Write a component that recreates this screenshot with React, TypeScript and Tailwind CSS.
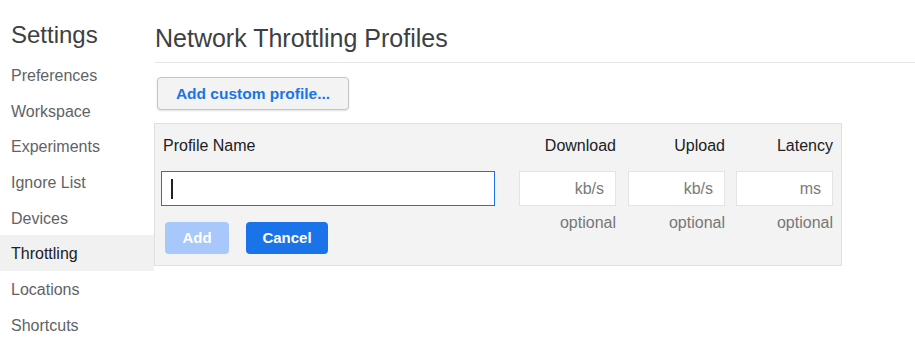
import React from "react";

const items = ["Preferences", "Workspace", "Experiments", "Ignore List", "Devices", "Throttling", "Locations", "Shortcuts"];

function SmallCol({ label, unit, width }: { label: string; unit: string; width: string }) {
  return (
    <div className={`flex flex-col items-end ${width}`}>
      <div className="h-[22px] leading-[22px] text-[16px] text-[#202124]">{label}</div>
      <div className="mt-[14px] h-[35px] w-[97px] bg-white border border-[#e3e3e3] flex items-center justify-end pr-[11px] text-[16px] text-[#7a7a7a]">
        {unit}
      </div>
      <div className="mt-[7px] h-[20px] leading-[20px] text-[16px] text-[#777777]">optional</div>
    </div>
  );
}

export default function App() {
  return (
    <div className="w-[915px] h-[359px] bg-white flex overflow-hidden" style={{ fontFamily: '"Liberation Sans", Arial, sans-serif' }}>
      <div className="w-[154px] shrink-0 flex flex-col">
        <div className="h-[57px] pl-[11px] pt-[20px] text-[24px] leading-[30px] text-[#3c4043]">Settings</div>
        {items.map((it) => (
          <div
            key={it}
            className={`h-[35.7px] pl-[11px] pt-[2px] flex items-center text-[16px] ${it === "Throttling" ? "bg-[#f1f1f1] text-[#202124]" : "text-[#5f6368]"}`}
          >
            {it}
          </div>
        ))}
      </div>
      <div className="flex-1 flex flex-col">
        <div className="ml-[1px] h-[63px] border-b border-[#e8e8e8] pt-[23px] text-[25px] leading-[30px] text-[#3c4043]">
          Network Throttling Profiles
        </div>
        <div className="mt-[14px] ml-[3px]">
          <button className="h-[33px] w-[192px] rounded-[4px] border border-[#c4c4c4] bg-[#f3f3f3] shadow-[0_1px_2px_rgba(0,0,0,0.12)] text-[15.5px] font-bold text-[#1a73e8]">
            Add custom profile...
          </button>
        </div>
        <div className="mt-[13px] w-[688px] h-[143px] bg-[#f3f3f3] border border-[#e0e0e0] flex pl-[6px]">
          <div className="flex flex-col w-[334px]">
            <div className="pt-[11px] pl-[2px] h-[33px] leading-[22px] text-[16px] text-[#202124]">Profile Name</div>
            <div className="mt-[14px] h-[35px] w-[334px] bg-white border-[1.5px] border-[#1a73e8] flex items-center pl-[9px]">
              <div className="w-[1.5px] h-[20px] bg-[#202124]"></div>
            </div>
            <div className="mt-[16px] flex ml-[4px]">
              <div className="w-[64px] h-[32px] rounded-[4px] bg-[#a8c7fa] text-white text-[15px] font-bold flex items-center justify-center">Add</div>
              <div className="ml-[17px] w-[82px] h-[32px] rounded-[4px] bg-[#1a73e8] text-white text-[15px] font-bold flex items-center justify-center">Cancel</div>
            </div>
          </div>
          <div className="flex pt-[11px]">
            <SmallCol label="Download" unit="kb/s" width="w-[121px]" />
            <SmallCol label="Upload" unit="kb/s" width="w-[109px]" />
            <SmallCol label="Latency" unit="ms" width="w-[108px]" />
          </div>
        </div>
      </div>
    </div>
  );
}
